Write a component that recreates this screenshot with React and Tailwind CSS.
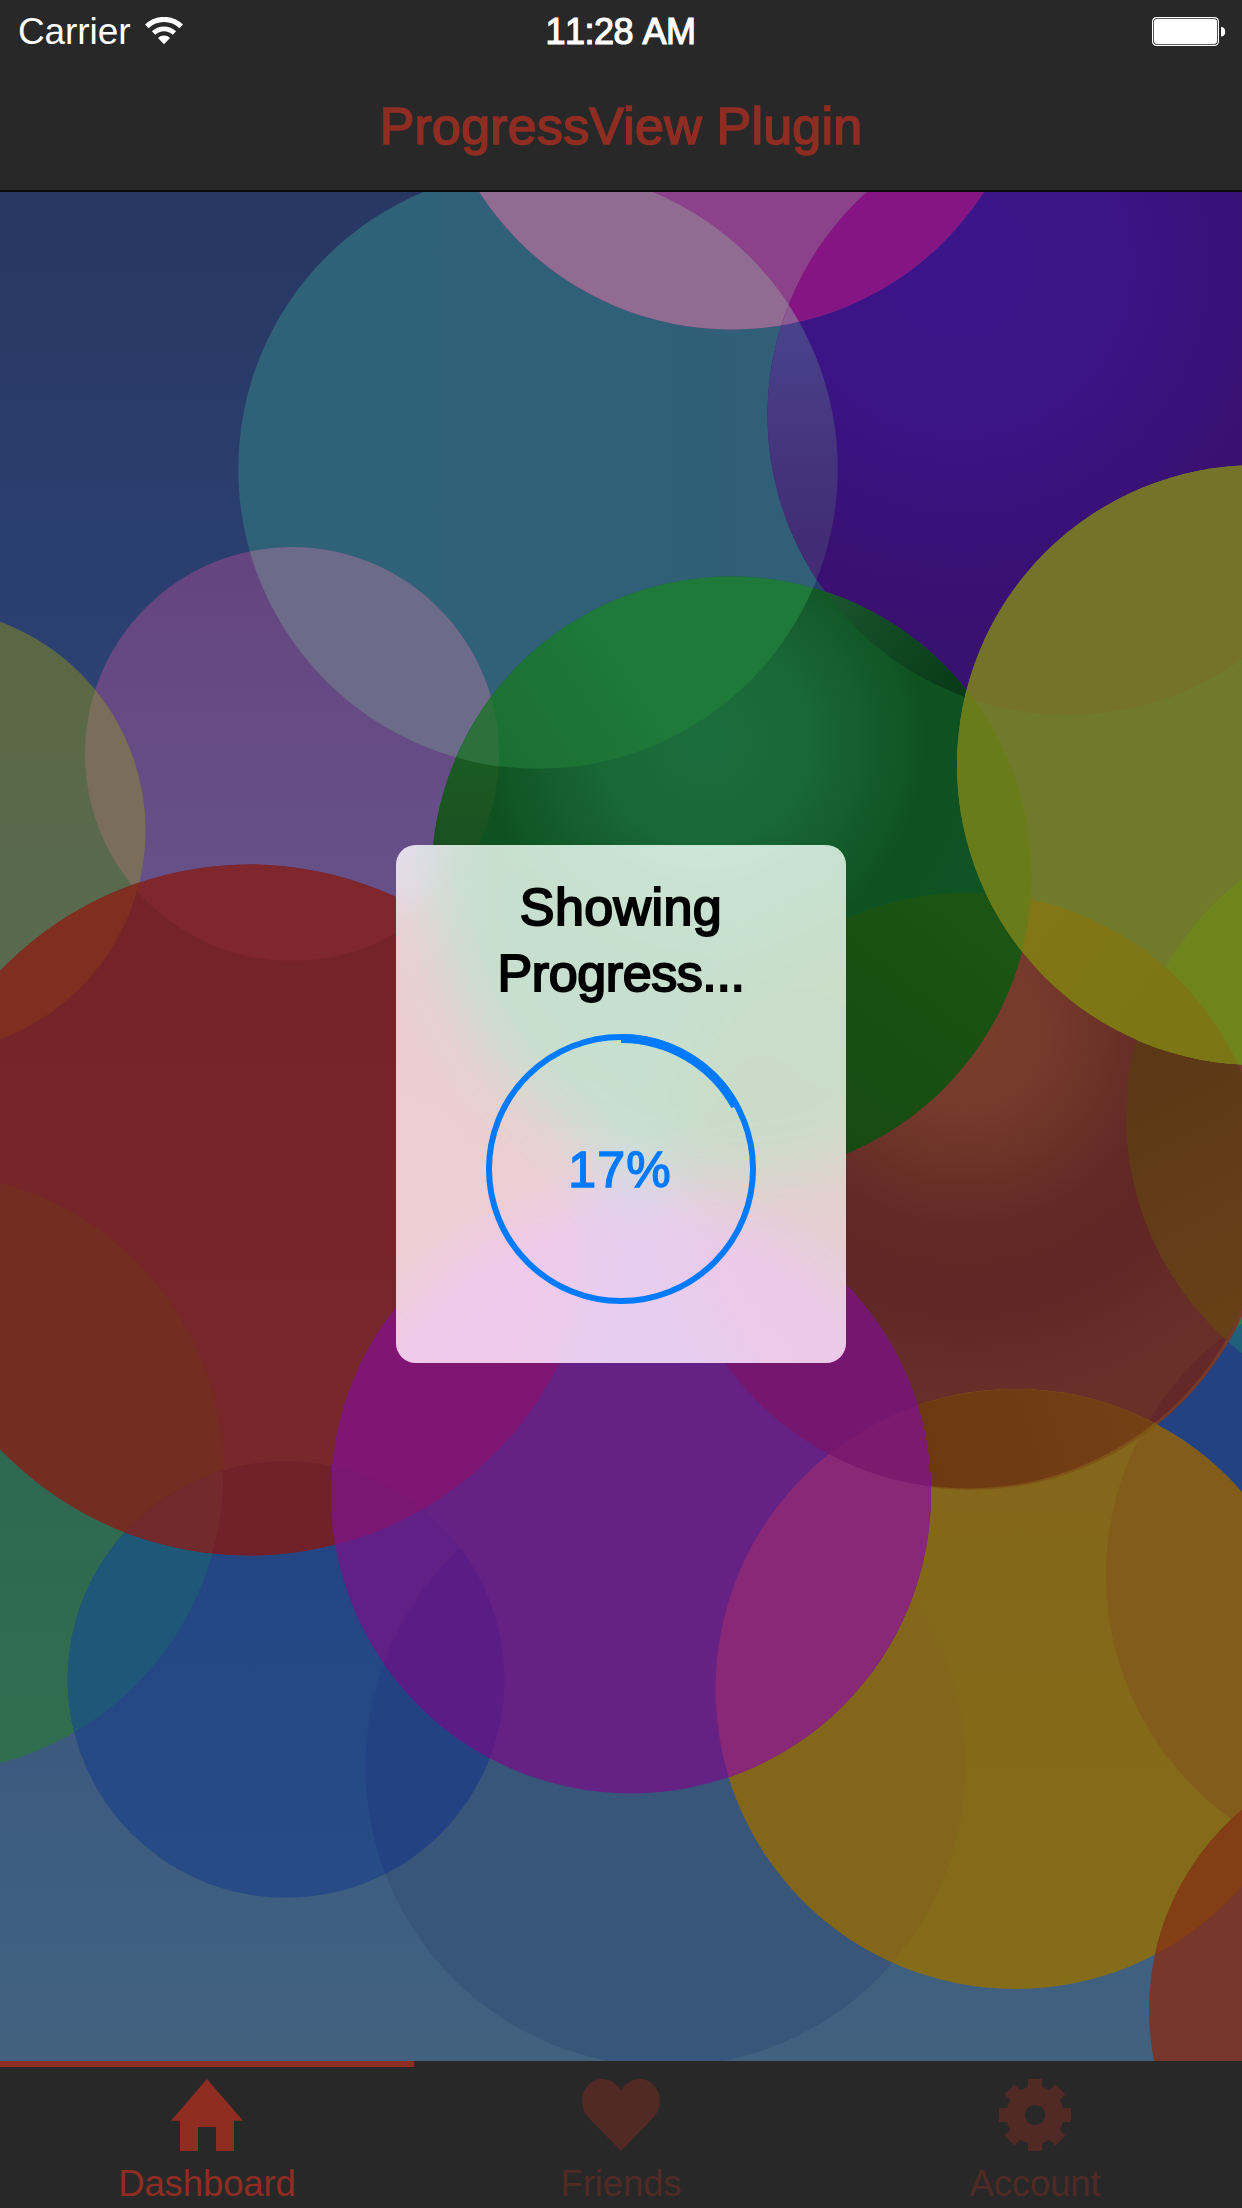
import React from "react";

const FONT = "font-['Liberation_Sans',Arial,sans-serif]";

const CIRCLES = {
  teal: [538, 469, 299.7],
  pink: [731.5, 29.5, 300],
  violet: [1067.5, 415, 300],
  green: [731.5, 876.5, 300],
  olive: [1257, 765, 300],
  orchid: [292, 754, 207],
  moss: [-77, 830.5, 222.4],
  red: [249.5, 1210, 345.5],
  fern: [-76.5, 1473, 300],
  blue: [286, 1679.5, 218.3],
  magenta: [631, 1493.5, 300],
  slate: [665.5, 1766.5, 300],
  brown: [968, 1190.5, 298],
  rim: [970.5, 1191, 299],
  gold: [1015.5, 1689, 300],
  lime: [1426, 1116, 300],
  navy: [1406, 1575, 300],
  rust: [1411, 2010, 262],
};

// Painted in order: [circle, fill, ...circles it is clipped to]
const LAYERS = [
  ["teal", "url(#tealFill)"],
  ["orchid", "url(#orchidFill)"],
  ["orchid", "#6c6c8a", "teal"],
  ["violet", "url(#violetFill)"],
  ["violet", "url(#violetTealFill)", "teal"],
  ["pink", "#8c428a"],
  ["pink", "#906c92", "teal"],
  ["pink", "#841583", "violet"],
  ["pink", "#8b5b93", "violet", "teal"],
  ["moss", "url(#mossFill)"],
  ["moss", "#7a6d5a", "orchid"],
  ["slate", "#375679"],
  ["fern", "url(#fernFill)"],
  ["blue", "url(#blueFill)"],
  ["blue", "#234283", "slate"],
  ["blue", "#1f5778", "fern"],
  ["navy", "#224284"],
  ["lime", "#2b7a4e"],
  ["lime", "#20607c", "navy"],
  ["red", "url(#redFill)"],
  ["red", "#80262d", "orchid"],
  ["red", "#7f2e20", "moss"],
  ["red", "#742d21", "fern"],
  ["red", "#702129", "blue"],
  ["red", "#732a2c", "blue", "fern"],
  ["rim", "#76392a"],
  ["brown", "url(#brownFill)"],
  ["brown", "#652829", "navy"],
  ["brown", "url(#brownLimeFill)", "lime"],
  ["gold", "url(#goldFill)"],
  ["gold", "#84661a", "slate"],
  ["gold", "#835c1b", "navy"],
  ["gold", "#7f5417", "rim"],
  ["gold", "url(#goldBrownFill)", "brown"],
  ["magenta", "#662184"],
  ["magenta", "#602086", "blue"],
  ["magenta", "#5c1c86", "blue", "slate"],
  ["magenta", "#7f1673", "red"],
  ["magenta", "#7b1675", "red", "blue"],
  ["magenta", "#882876", "gold"],
  ["magenta", "#75176f", "brown"],
  ["magenta", "#7c1a70", "brown", "gold"],
  ["rust", "#78372b"],
  ["rust", "#843e13", "gold"],
  ["green", "url(#greenFill)"],
  ["green", "url(#greenOrchidFill)", "orchid"],
  ["green", "url(#greenTealFill)", "teal"],
  ["green", "#2c713c", "teal", "orchid"],
  ["green", "url(#greenVioletFill)", "violet"],
  ["green", "url(#greenBrownFill)", "brown"],
  ["olive", "#707a2b"],
  ["olive", "#757229", "violet"],
  ["olive", "#70841e", "lime"],
  ["olive", "url(#oliveBrownFill)", "brown"],
  ["olive", "#6a7c19", "green"],
];

function Linear({ id, x1 = 0, y1, x2 = 0, y2, from, to }) {
  return (
    <linearGradient id={id} gradientUnits="userSpaceOnUse" x1={x1} y1={y1} x2={x2} y2={y2}>
      <stop offset="0" stopColor={from} />
      <stop offset="1" stopColor={to} />
    </linearGradient>
  );
}

function Disc({ name, fill, clips }) {
  const [cx, cy, r] = CIRCLES[name];
  return clips.reduce(
    (node, clip) => <g clipPath={`url(#clip-${clip})`}>{node}</g>,
    <circle cx={cx} cy={cy} r={r} fill={fill} />
  );
}

function WallpaperDefs() {
  return (
    <defs>
      {Object.entries(CIRCLES).map(([name, [cx, cy, r]]) => (
        <clipPath key={name} id={`clip-${name}`}>
          <circle cx={cx} cy={cy} r={r} />
        </clipPath>
      ))}
      <linearGradient id="sky" gradientUnits="userSpaceOnUse" x1="0" y1="192" x2="0" y2="2061">
        <stop offset="0" stopColor="#283763" />
        <stop offset="0.23" stopColor="#2b4070" />
        <stop offset="0.8" stopColor="#3c587e" />
        <stop offset="0.9" stopColor="#3d5e80" />
        <stop offset="1" stopColor="#42617f" />
      </linearGradient>
      <Linear id="tealFill" x1={240} x2={838} y1={469} y2={469} from="#2f6278" to="#305f77" />
      <Linear id="orchidFill" y1={547} y2={870} from="#65447f" to="#665088" />
      <Linear id="mossFill" y1={620} y2={1000} from="#5b6845" to="#586a4f" />
      <Linear id="fernFill" y1={1450} y2={1763} from="#2f6852" to="#306e4e" />
      <Linear id="blueFill" y1={1540} y2={1898} from="#244584" to="#274c85" />
      <Linear id="redFill" y1={930} y2={1555} from="#742428" to="#79282b" />
      <Linear id="goldFill" y1={1490} y2={1988} from="#84671a" to="#846c19" />
      <Linear id="goldBrownFill" x1={900} x2={1150} y1={1470} y2={1390} from="#6d3711" to="#744014" />
      <Linear id="violetTealFill" y1={310} y2={540} from="#49438c" to="#422c74" />
      <Linear id="greenOrchidFill" y1={690} y2={850} from="#1e6328" to="#195020" />
      <Linear id="greenTealFill" x1={490} x2={620} y1={740} y2={650} from="#1a7030" to="#1e793b" />
      <Linear id="greenVioletFill" x1={840} x2={950} y1={570} y2={680} from="#1b562f" to="#0a3c1a" />
      <Linear id="greenBrownFill" x1={830} x2={1000} y1={1150} y2={940} from="#174a12" to="#1b5413" />
      <Linear id="brownLimeFill" x1={1126} x2={1242} y1={1080} y2={1300} from="#5d3817" to="#664017" />
      <Linear id="oliveBrownFill" x1={1030} x2={1242} y1={900} y2={1050} from="#827616" to="#7b7615" />
      <radialGradient id="violetFill" gradientUnits="userSpaceOnUse" cx="960" cy="265" r="400">
        <stop offset="0" stopColor="#3b158a" />
        <stop offset="0.4" stopColor="#3b1486" />
        <stop offset="0.8" stopColor="#3a1073" />
        <stop offset="1" stopColor="#39116e" />
      </radialGradient>
      <radialGradient id="greenFill" gradientUnits="userSpaceOnUse" cx="705" cy="740" r="295">
        <stop offset="0" stopColor="#1c6d3d" />
        <stop offset="0.33" stopColor="#1a6838" />
        <stop offset="0.75" stopColor="#0f5221" />
        <stop offset="1" stopColor="#105324" />
      </radialGradient>
      <radialGradient id="brownFill" gradientUnits="userSpaceOnUse" cx="965" cy="1030" r="380">
        <stop offset="0" stopColor="#793d2b" />
        <stop offset="0.22" stopColor="#753a2a" />
        <stop offset="0.52" stopColor="#632926" />
        <stop offset="0.72" stopColor="#612625" />
        <stop offset="1" stopColor="#69302a" />
      </radialGradient>
    </defs>
  );
}

function Wallpaper({ withDefs = false }) {
  return (
    <svg className="absolute inset-0 h-full w-full" viewBox="0 192 1242 1869" preserveAspectRatio="none" aria-hidden="true">
      {withDefs && <WallpaperDefs />}
      <rect x="0" y="192" width="1242" height="1869" fill="url(#sky)" />
      {LAYERS.map(([name, fill, ...clips], i) => (
        <Disc key={i} name={name} fill={fill} clips={clips} />
      ))}
    </svg>
  );
}

// Frosted panel backing: the wallpaper again, aligned with the page, blurred and lightened
function Frost() {
  return (
    <div className="absolute inset-0 overflow-hidden rounded-[20px]">
      <div className="absolute -top-[653px] -left-[396px] h-[1869px] w-[1242px] blur-[30px] brightness-[1.95]">
        <Wallpaper />
      </div>
      <div className="absolute inset-0 bg-[rgba(237,237,237,0.82)]" />
    </div>
  );
}

function WifiIcon() {
  return (
    <svg className="h-[28px] w-[38px]" viewBox="0 0 38 28" fill="none" aria-hidden="true">
      <path d="M1.8 9.4a24.6 24.6 0 0 1 34.4 0" stroke="#fff" strokeWidth="5" />
      <path d="M8.600 16a15 15 0 0 1 20.800 0" stroke="#fff" strokeWidth="4.8" />
      <path d="M19 27.200l-6-6.200a8.600 8.600 0 0 1 12 0z" fill="#fff" />
    </svg>
  );
}

function BatteryIcon() {
  return (
    <svg className="h-[29px] w-[74px]" viewBox="0 0 74 29" aria-hidden="true">
      <rect x="0.6" y="0.6" width="65.8" height="27.8" rx="4" fill="none" stroke="#fff" strokeWidth="1.2" />
      <rect x="2" y="2" width="63" height="25" rx="3" fill="#fff" />
      <path d="M69 10c2.800 0 4.200 1.800 4.200 4.800s-1.400 4.800-4.200 4.800z" fill="#fff" />
    </svg>
  );
}

function HomeIcon() {
  return (
    <svg className="h-[72px] w-[72px]" viewBox="0 0 24 24" fill="currentColor" aria-hidden="true">
      <path d="M12 0l12 13.900h-3V24h-6v-8H9v8H3V13.900H0z" />
    </svg>
  );
}

function HeartIcon() {
  return (
    <svg className="h-[72px] w-[78px]" viewBox="0 0 78 72" fill="currentColor" aria-hidden="true">
      <path d="M39 72L7 39C2.500 34 0 29 0 22.500C0 9.500 9 0 20 0c8 0 14.500 4.500 19 11C43.500 4.500 50 0 58 0c11 0 20 9.500 20 22.500C78 29 75.500 34 71 39z" />
    </svg>
  );
}

function GearIcon() {
  return (
    <svg className="h-[72px] w-[72px]" viewBox="-36 -36 72 72" fill="currentColor" aria-hidden="true">
      <defs>
        <mask id="gearHole">
          <rect x="-36" y="-36" width="72" height="72" fill="#fff" />
          <circle r="10.100" fill="#000" />
        </mask>
      </defs>
      <g mask="url(#gearHole)">
        <circle r="29" />
        {[0, 45, 90, 135].map((angle) => (
          <rect key={angle} x="-7" y="-36" width="14" height="72" transform={`rotate(${angle})`} />
        ))}
      </g>
    </svg>
  );
}

function ProgressRing({ percent }) {
  const length = 2 * Math.PI * 130.5;
  return (
    <div className="relative flex h-[270px] w-[270px] items-center justify-center">
      <svg className="absolute inset-0 h-full w-full" viewBox="0 0 270 270" fill="none" stroke="#007aff" aria-hidden="true">
        <circle cx="135" cy="135" r="132" strokeWidth="6" />
        <circle
          cx="135"
          cy="135"
          r="130.5"
          strokeWidth="9"
          strokeDasharray={`${(length * percent) / 100} ${length}`}
          transform="rotate(-90 135 135)"
        />
      </svg>
      <span className="pt-[2px] pr-[2px] text-[50px] leading-[60px] tracking-[1.2px] text-[#007aff] [-webkit-text-stroke:1.500px_#007aff]">
        {percent}%
      </span>
    </div>
  );
}

function Tab({ icon, label, active }) {
  return (
    <div
      className={
        active
          ? "flex flex-1 flex-col items-center border-t-[6px] border-[#8f2d23] pt-3 text-[#8f2d23]"
          : "flex flex-1 flex-col items-center border-t-[6px] border-transparent pt-3 text-[#512a26]"
      }
    >
      {icon}
      <span className="mt-3 text-[36.5px] leading-[42px] tracking-[-0.1px]">{label}</span>
    </div>
  );
}

export default function App() {
  return (
    <div className={`${FONT} flex h-[2208px] w-[1242px] flex-col overflow-hidden bg-[#282828]`}>
      <header className="flex h-[192px] shrink-0 flex-col border-b-2 border-[#0a0a0c]">
        <div className="grid h-[60px] grid-cols-3 items-center pr-4 pl-[18px] text-[36px] leading-[60px] text-white">
          <div className="flex items-center gap-[15px]">
            <span className="pt-[2px] text-[37px] tracking-[-0.1px]">Carrier</span>
            <WifiIcon />
          </div>
          <span className="pt-[2px] pr-[3px] text-center tracking-[-0.5px] whitespace-nowrap [-webkit-text-stroke:1.200px_white] [font-kerning:none]">
            11:28 AM
          </span>
          <div className="flex justify-end">
            <BatteryIcon />
          </div>
        </div>
        <h1 className="pt-[33px] text-center text-[52px] leading-[66px] tracking-[0.2px] text-[#8f2d23] [-webkit-text-stroke:1.600px_#8f2d23]">
          ProgressView Plugin
        </h1>
      </header>

      <main className="relative flex h-[1869px] shrink-0 flex-col items-center overflow-hidden">
        <Wallpaper withDefs />
        <section className="relative mt-[653px] h-[518px] w-[450px]">
          <Frost />
          <div className="relative flex flex-col items-center pt-[29px]">
            <p className="mb-[28px] flex flex-col items-center text-[52px] leading-[66px] text-black [-webkit-text-stroke:2px_black]">
              <span className="tracking-[0.4px]">Showing</span>
              <span className="tracking-[-0.400px]">Progress...</span>
            </p>
            <ProgressRing percent={17} />
          </div>
        </section>
      </main>

      <nav className="flex h-[147px] shrink-0">
        <Tab icon={<HomeIcon />} label="Dashboard" active />
        <Tab icon={<HeartIcon />} label="Friends" />
        <Tab icon={<GearIcon />} label="Account" />
      </nav>
    </div>
  );
}
